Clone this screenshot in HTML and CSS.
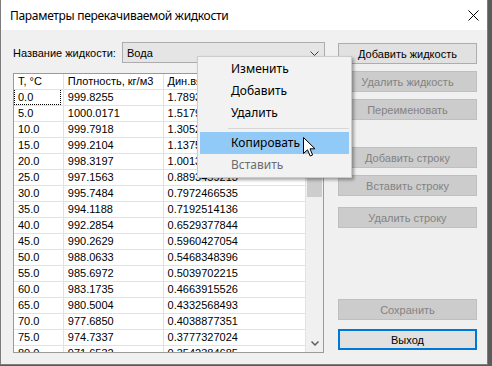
FILE: index.html
```html
<!DOCTYPE html>
<html lang="ru">
<head>
<meta charset="utf-8">
<title>Параметры перекачиваемой жидкости</title>
<link rel="stylesheet" href="styles.css">
</head>
<body>
<div class="window">
  <div class="titlebar">
    <span class="title">Параметры перекачиваемой жидкости</span>
    <svg class="close" width="11" height="11" viewBox="0 0 11 11"><path d="M0.5 0.5 L10.5 10.5 M10.5 0.5 L0.5 10.5" stroke="#000" stroke-width="1" fill="none"/></svg>
  </div>
  <div class="client">
    <div class="left">
      <div class="fluid-row">
        <span class="label">Название жидкости:</span>
        <div class="combo">
          <span class="combo-text">Вода</span>
          <svg class="chev" width="9" height="5" viewBox="0 0 9 5"><path d="M0.5 0.5 L4.5 4.5 L8.5 0.5" stroke="#3c3c3c" stroke-width="1" fill="none"/></svg>
        </div>
      </div>
      <div class="grid">
        <div class="grid-main">
          <div class="row head">
            <div class="cell c1">Т, °C</div>
            <div class="cell c2">Плотность, кг/м3</div>
            <div class="cell c3">Дин.вязкость, мПа·с</div>
          </div>
          <div class="row"><div class="cell c1"><span class="focus">0.0</span></div><div class="cell c2">999.8255</div><div class="cell c3">1.7893221547</div></div>
          <div class="row"><div class="cell c1">5.0</div><div class="cell c2">1000.0171</div><div class="cell c3">1.5179604113</div></div>
          <div class="row"><div class="cell c1">10.0</div><div class="cell c2">999.7918</div><div class="cell c3">1.3052417458</div></div>
          <div class="row"><div class="cell c1">15.0</div><div class="cell c2">999.2104</div><div class="cell c3">1.1375822106</div></div>
          <div class="row"><div class="cell c1">20.0</div><div class="cell c2">998.3197</div><div class="cell c3">1.0013587249</div></div>
          <div class="row"><div class="cell c1">25.0</div><div class="cell c2">997.1563</div><div class="cell c3">0.8893459213</div></div>
          <div class="row"><div class="cell c1">30.0</div><div class="cell c2">995.7484</div><div class="cell c3">0.7972466535</div></div>
          <div class="row"><div class="cell c1">35.0</div><div class="cell c2">994.1188</div><div class="cell c3">0.7192514136</div></div>
          <div class="row"><div class="cell c1">40.0</div><div class="cell c2">992.2854</div><div class="cell c3">0.6529377844</div></div>
          <div class="row"><div class="cell c1">45.0</div><div class="cell c2">990.2629</div><div class="cell c3">0.5960427054</div></div>
          <div class="row"><div class="cell c1">50.0</div><div class="cell c2">988.0633</div><div class="cell c3">0.5468348396</div></div>
          <div class="row"><div class="cell c1">55.0</div><div class="cell c2">985.6972</div><div class="cell c3">0.5039702215</div></div>
          <div class="row"><div class="cell c1">60.0</div><div class="cell c2">983.1735</div><div class="cell c3">0.4663915526</div></div>
          <div class="row"><div class="cell c1">65.0</div><div class="cell c2">980.5004</div><div class="cell c3">0.4332568493</div></div>
          <div class="row"><div class="cell c1">70.0</div><div class="cell c2">977.6850</div><div class="cell c3">0.4038877351</div></div>
          <div class="row"><div class="cell c1">75.0</div><div class="cell c2">974.7337</div><div class="cell c3">0.3777327024</div></div>
          <div class="row"><div class="cell c1">80.0</div><div class="cell c2">971.6532</div><div class="cell c3">0.3542384685</div></div>
        </div>
        <div class="vscroll">
          <div class="sb-arrow up"><svg width="8" height="5" viewBox="0 0 8 5"><path d="M0.5 4.5 L4 1 L7.5 4.5" stroke="#606060" stroke-width="1.5" fill="none"/></svg></div>
          <div class="sb-track"><div class="sb-thumb"></div></div>
          <div class="sb-arrow down"><svg width="8" height="5" viewBox="0 0 8 5"><path d="M0.5 0.5 L4 4 L7.5 0.5" stroke="#606060" stroke-width="1.5" fill="none"/></svg></div>
        </div>
      </div>
    </div>
    <div class="buttons">
      <div class="btn">Добавить жидкость</div>
      <div class="btn dis g7">Удалить жидкость</div>
      <div class="btn dis g7">Переименовать</div>
      <div class="btn dis g27">Добавить строку</div>
      <div class="btn dis g7">Вставить строку</div>
      <div class="btn dis g11">Удалить строку</div>
      <div class="btn dis g71">Сохранить</div>
      <div class="btn default g9">Выход</div>
    </div>
  </div>
  <div class="menu">
    <div class="mi">Изменить</div>
    <div class="mi">Добавить</div>
    <div class="mi">Удалить</div>
    <div class="sep"></div>
    <div class="mi hot">Копировать</div>
    <div class="mi off">Вставить</div>
  </div>
  <svg class="cursor" width="13" height="20" viewBox="0 0 13 20"><path d="M0.5 0.5 L0.5 16.5 L4.5 12.8 L7.2 19 L9.6 18 L7 11.8 L12 11.8 Z" fill="#fff" stroke="#000" stroke-width="1" stroke-linejoin="miter"/></svg>
</div>
</body>
</html>
```
FILE: styles.css
```css
* { box-sizing: border-box; }
html, body { margin: 0; padding: 0; }
body {
  width: 492px;
  height: 366px;
  background: #5b5b5b;
  overflow: hidden;
  font-family: "Liberation Sans", Arial, sans-serif;
  font-size: 11px;
  color: #000;
}
.window {
  position: relative;
  width: 488px;
  height: 365px;
  background: #f0f0f0;
  border: 1px solid #7c7c7c;
  border-top: none;
  display: flex;
  flex-direction: column;
}
.titlebar {
  height: 30px;
  background: #fff;
  display: flex;
  align-items: center;
  justify-content: space-between;
  padding: 0 8px 0 9px;
  flex: none;
}
.title {
  font-family: "Noto Sans", "Open Sans", sans-serif;
  font-size: 12px;
  color: #000;
  letter-spacing: -0.3px;
}
.client {
  flex: 1;
  min-height: 0;
  display: flex;
  padding: 12px 10px 11px 12px;
  gap: 13px;
}
.left {
  width: 312px;
  min-height: 0;
  display: flex;
  flex-direction: column;
  gap: 10px;
}
.fluid-row {
  display: flex;
  align-items: center;
  height: 21px;
  flex: none;
  justify-content: space-between;
}
.label { padding-top: 1px; }
.combo {
  width: 203px;
  height: 21px;
  background: #e5e5e5;
  border: 1px solid #acacac;
  display: flex;
  align-items: center;
  justify-content: space-between;
  padding: 0 5px 0 4px;
}
.chev { margin-top: 1px; }
.grid {
  flex: 1;
  min-height: 0;
  border: 1px solid #9a9a9a;
  background: #fff;
  display: flex;
  overflow: hidden;
  width: 311px;
}
.grid-main {
  width: 293px;
  overflow: hidden;
}
.row {
  display: flex;
  height: 16px;
  border-bottom: 1px solid #e2e2e2;
}
.cell {
  height: 15px;
  line-height: 15px;
  padding-left: 4px;
  border-right: 1px solid #e2e2e2;
  white-space: nowrap;
  overflow: hidden;
}
.c1 { width: 50px; }
.c2 { width: 100px; }
.c3 { width: 143px; }
.focus {
  display: inline-block;
  outline: 1px dotted #000;
  outline-offset: 0;
  width: 45px;
  height: 14px;
  line-height: 14px;
  margin-left: -3px;
  padding-left: 3px;
}
.vscroll {
  width: 17px;
  background: #f0f0f0;
  display: flex;
  flex-direction: column;
}
.sb-arrow {
  height: 17px;
  display: flex;
  align-items: center;
  justify-content: center;
  flex: none;
}
.sb-track { flex: 1; padding: 0 1px; }
.sb-thumb {
  height: 106px;
  background: #cdcdcd;
}
.buttons {
  width: 139px;
  display: flex;
  flex-direction: column;
  padding-top: 1px;
}
.btn {
  height: 21px;
  flex: none;
  background: #e1e1e1;
  border: 1px solid #adadad;
  display: flex;
  align-items: center;
  justify-content: center;
  color: #000;
}
.btn.dis {
  background: #cccccc;
  border-color: #bfbfbf;
  color: #838383;
}
.btn.default {
  border: 2px solid #0078d7;
}
.g7 { margin-top: 7px; }
.g9 { margin-top: 9px; }
.g11 { margin-top: 11px; }
.g27 { margin-top: 27px; }
.g71 { margin-top: 71px; }
.menu {
  position: absolute;
  left: 196px;
  top: 56px;
  width: 155px;
  height: 122px;
  background: #f2f2f2;
  border: 1px solid #cccccc;
  box-shadow: 2px 2px 3px rgba(0, 0, 0, 0.35);
  padding: 1px 2px 0 2px;
  font-family: "Noto Sans", "Open Sans", sans-serif;
  font-size: 12px;
}
.mi {
  height: 22px;
  line-height: 22px;
  padding-left: 31px;
  color: #000;
}
.mi.hot { background: #91c9f7; }
.mi.off { color: #6d6d6d; }
.sep {
  margin-left: 28px;
  border-top: 1px solid #d7d7d7;
  margin-top: 4px;
  height: 4px;
}
.cursor {
  position: absolute;
  left: 302px;
  top: 137px;
}
```
